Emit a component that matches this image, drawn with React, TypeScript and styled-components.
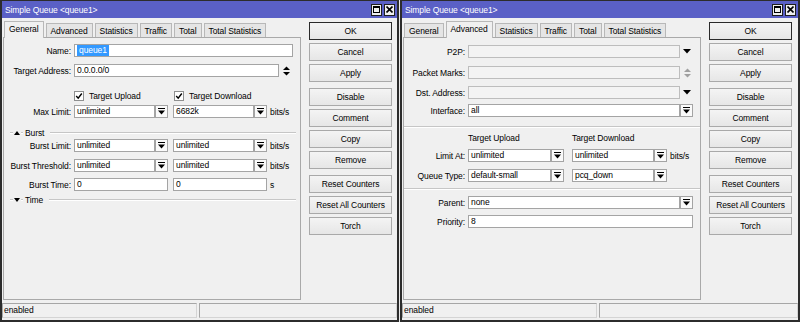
import React from "react";
import styled, { createGlobalStyle } from "styled-components";

const Global = createGlobalStyle`
  html, body { margin: 0; padding: 0; background: #e9e9e9; }
  body {
    font-family: "Liberation Sans", Arial, sans-serif;
    font-size: 8.5px;
    letter-spacing: -0.1px;
    color: #000;
  }
  * { box-sizing: border-box; }
`;

const Desktop = styled.div`
  display: flex;
  gap: 1px;
  width: 800px;
  height: 322px;
`;

const Win = styled.div<{ $w: number }>`
  width: ${(p) => p.$w}px;
  height: 322px;
  flex: none;
  border: 2px solid #2c2c2c;
  border-top-width: 1px;
  background: #f0f0f0;
  display: flex;
  flex-direction: column;
`;

const TitleBar = styled.div`
  height: 17px;
  flex: none;
  background: #5a60c6;
  color: #fff;
  display: flex;
  align-items: center;
  padding: 0 2px 0 3px;
`;

const TitleText = styled.span`
  flex: 1;
  white-space: nowrap;
`;

const TitleBtns = styled.div`
  display: flex;
  gap: 2px;
`;

const TitleBtn = styled.div`
  width: 11px;
  height: 12px;
  background: #efefef;
  border: 1px solid #1e1e1e;
  display: flex;
  align-items: center;
  justify-content: center;
`;

const Body = styled.div`
  flex: 1;
  display: flex;
  align-items: flex-start;
`;

const TabArea = styled.div`
  width: 298px;
  margin-left: 1px;
  padding-top: 3px;
  display: flex;
  flex-direction: column;
`;

const TabStrip = styled.div`
  display: flex;
  align-items: flex-end;
  gap: 2px;
  height: 16px;
  padding-left: 1px;
`;

const Tab = styled.div<{ $active?: boolean }>`
  height: ${(p) => (p.$active ? 17 : 14)}px;
  margin-bottom: ${(p) => (p.$active ? -1 : 0)}px;
  padding: 0 4px ${(p) => (p.$active ? 2 : 0)}px;
  border: 1px solid #b8b8b8;
  border-bottom: none;
  background: ${(p) => (p.$active ? "#f0f0f0" : "#e5e5e5")};
  display: flex;
  align-items: center;
  justify-content: center;
  white-space: nowrap;
  position: relative;
  z-index: ${(p) => (p.$active ? 1 : 0)};
`;

const Panel = styled.div`
  height: 263px;
  border: 1px solid #a9a9a9;
  background: #f0f0f0;
`;

const Form = styled.div<{ $labelW: number }>`
  --label-w: ${(p) => p.$labelW}px;
  display: flex;
  flex-direction: column;
`;

const Row = styled.div<{ $mt: number; $h?: number }>`
  display: flex;
  align-items: center;
  margin-top: ${(p) => p.$mt}px;
  height: ${(p) => p.$h ?? 13}px;
`;

const Label = styled.div`
  width: var(--label-w);
  margin-right: 3px;
  flex: none;
  text-align: right;
  white-space: nowrap;
`;

const TextBox = styled.div<{ $w: number; $disabled?: boolean }>`
  width: ${(p) => p.$w}px;
  height: 13px;
  flex: none;
  border: 1px solid ${(p) => (p.$disabled ? "#bdbdbd" : "#a4a4a4")};
  background: ${(p) => (p.$disabled ? "#f3f3f3" : "#ffffff")};
  padding-left: 2px;
  line-height: 11px;
  white-space: nowrap;
  overflow: hidden;
`;

const Sel = styled.span`
  display: inline-block;
  height: 11px;
  padding: 0 2px;
  background: #3399ff;
  color: #fff;
`;

const DropBtn = styled.div`
  width: 13px;
  height: 13px;
  flex: none;
  border: 1px solid #a4a4a4;
  background: #fafafa;
  display: flex;
  align-items: center;
  justify-content: center;
`;

const IconSlot = styled.div`
  width: 14px;
  height: 13px;
  flex: none;
  display: flex;
  align-items: center;
  justify-content: center;
`;

const Gap = styled.div<{ $w: number }>`
  width: ${(p) => p.$w}px;
  flex: none;
`;

const Unit = styled.span`
  margin-left: 3px;
  white-space: nowrap;
`;

const CheckItem = styled.div<{ $w: number }>`
  width: ${(p) => p.$w}px;
  flex: none;
  display: flex;
  align-items: center;
  gap: 5px;
  white-space: nowrap;
`;

const CheckBox = styled.div`
  width: 10px;
  height: 10px;
  flex: none;
  border: 1px solid #8e8f8f;
  background: #fff;
  display: flex;
  align-items: center;
  justify-content: center;
`;

const HeadText = styled.div<{ $w: number }>`
  width: ${(p) => p.$w}px;
  flex: none;
  white-space: nowrap;
`;

const GroupHead = styled.div<{ $mt: number }>`
  display: flex;
  align-items: center;
  height: 10px;
  margin-top: ${(p) => p.$mt}px;
  padding: 0 4px 0 6px;
  gap: 1px;
`;

const Etch = styled.div<{ $w?: number }>`
  height: 2px;
  border-top: 1px solid #c6c6c6;
  border-bottom: 1px solid #ffffff;
  ${(p) => (p.$w ? `width: ${p.$w}px; flex: none;` : "flex: 1;")}
`;

const GroupLabel = styled.span`
  margin: 0 5px 0 1px;
  white-space: nowrap;
`;

const Separator = styled.div<{ $mt: number }>`
  height: 2px;
  margin: ${(p) => p.$mt}px 0 0 0;
  border-top: 1px solid #c6c6c6;
  border-bottom: 1px solid #ffffff;
`;

const BtnCol = styled.div`
  width: 83px;
  margin-left: 8px;
  padding-top: 4px;
  display: flex;
  flex-direction: column;
  gap: 6px;
`;

const BtnGroup = styled.div`
  display: flex;
  flex-direction: column;
  gap: 3px;
`;

const Btn = styled.div<{ $default?: boolean }>`
  height: 18px;
  border: 1px solid ${(p) => (p.$default ? "#2a2a2a" : "#a9a9a9")};
  background: linear-gradient(#f4f4f4, #e6e6e6);
  display: flex;
  align-items: center;
  justify-content: center;
  white-space: nowrap;
`;

const StatusBar = styled.div`
  height: 19px;
  flex: none;
  display: flex;
  gap: 2px;
  padding-top: 2px;
`;

const StatusCell = styled.div<{ $w?: number }>`
  height: 15px;
  ${(p) => (p.$w ? `width: ${p.$w}px; flex: none;` : "flex: 1;")}
  border: 1px solid #a6a6a6;
  border-right-color: #d4d4d4;
  border-bottom-color: #d4d4d4;
  padding-left: 1px;
  line-height: 13px;
`;

/* ---------- icons ---------- */

const MaxIcon = () => (
  <svg width="7" height="7" viewBox="0 0 7 7">
    <rect x="0.5" y="0.5" width="6" height="6" fill="none" stroke="#000" />
    <rect x="0" y="0" width="7" height="2" fill="#000" />
  </svg>
);

const CloseIcon = () => (
  <svg width="7" height="7" viewBox="0 0 7 7">
    <path d="M0.5 0.5 L6.5 6.5 M6.5 0.5 L0.5 6.5" stroke="#000" strokeWidth="1.6" />
  </svg>
);

const BarDown = () => (
  <svg width="7" height="7" viewBox="0 0 7 7">
    <rect x="0" y="0" width="7" height="1" fill="#000" />
    <path d="M0 2.5 L7 2.5 L3.5 6.5 Z" fill="#000" />
  </svg>
);

const SpinIcon = ({ color = "#000" }: { color?: string }) => (
  <svg width="7" height="10" viewBox="0 0 7 10">
    <path d="M0 4 L7 4 L3.5 0.5 Z" fill={color} />
    <path d="M0 6 L7 6 L3.5 9.5 Z" fill={color} />
  </svg>
);

const DownIcon = () => (
  <svg width="8" height="5" viewBox="0 0 8 5">
    <path d="M0 0 L8 0 L4 4.5 Z" fill="#000" />
  </svg>
);

const Tri = ({ up }: { up?: boolean }) => (
  <svg width="6" height="4" viewBox="0 0 6 4">
    {up ? <path d="M0 4 L6 4 L3 0 Z" fill="#000" /> : <path d="M0 0 L6 0 L3 4 Z" fill="#000" />}
  </svg>
);

const CheckMark = () => (
  <svg width="8" height="8" viewBox="0 0 8 8">
    <path d="M1.2 4 L3.2 6.2 L6.8 1.5" fill="none" stroke="#000" strokeWidth="1.4" />
  </svg>
);

/* ---------- composites ---------- */

const TABS = ["General", "Advanced", "Statistics", "Traffic", "Total", "Total Statistics"];

const Combo = ({ w, value }: { w: number; value: string }) => (
  <>
    <TextBox $w={w}>{value}</TextBox>
    <DropBtn>
      <BarDown />
    </DropBtn>
  </>
);

const Buttons = () => (
  <BtnCol>
    <BtnGroup>
      <Btn $default>OK</Btn>
      <Btn>Cancel</Btn>
      <Btn>Apply</Btn>
    </BtnGroup>
    <BtnGroup>
      <Btn>Disable</Btn>
      <Btn>Comment</Btn>
      <Btn>Copy</Btn>
      <Btn>Remove</Btn>
    </BtnGroup>
    <BtnGroup>
      <Btn>Reset Counters</Btn>
      <Btn>Reset All Counters</Btn>
      <Btn>Torch</Btn>
    </BtnGroup>
  </BtnCol>
);

const Window = ({ w, active, children }: { w: number; active: string; children: React.ReactNode }) => (
  <Win $w={w}>
    <TitleBar>
      <TitleText>Simple Queue &lt;queue1&gt;</TitleText>
      <TitleBtns>
        <TitleBtn>
          <MaxIcon />
        </TitleBtn>
        <TitleBtn>
          <CloseIcon />
        </TitleBtn>
      </TitleBtns>
    </TitleBar>
    <Body>
      <TabArea>
        <TabStrip>
          {TABS.map((t) => (
            <Tab key={t} $active={t === active}>
              {t}
            </Tab>
          ))}
        </TabStrip>
        <Panel>{children}</Panel>
      </TabArea>
      <Buttons />
    </Body>
    <StatusBar>
      <StatusCell $w={195}>enabled</StatusCell>
      <StatusCell />
    </StatusBar>
  </Win>
);

const GeneralForm = () => (
  <Form $labelW={67}>
    <Row $mt={6}>
      <Label>Name:</Label>
      <TextBox $w={219}>
        <Sel>queue1</Sel>
      </TextBox>
    </Row>
    <Row $mt={7}>
      <Label>Target Address:</Label>
      <TextBox $w={205}>0.0.0.0/0</TextBox>
      <IconSlot>
        <SpinIcon />
      </IconSlot>
    </Row>
    <Row $mt={13} $h={12}>
      <Label />
      <CheckItem $w={100}>
        <CheckBox>
          <CheckMark />
        </CheckBox>
        Target Upload
      </CheckItem>
      <CheckItem $w={110}>
        <CheckBox>
          <CheckMark />
        </CheckBox>
        Target Download
      </CheckItem>
    </Row>
    <Row $mt={3}>
      <Label>Max Limit:</Label>
      <Combo w={81} value="unlimited" />
      <Gap $w={5} />
      <Combo w={81} value="6682k" />
      <Unit>bits/s</Unit>
    </Row>
    <GroupHead $mt={10}>
      <Etch $w={3} />
      <Tri up />
      <Etch $w={2} />
      <GroupLabel>Burst</GroupLabel>
      <Etch />
    </GroupHead>
    <Row $mt={1}>
      <Label>Burst Limit:</Label>
      <Combo w={81} value="unlimited" />
      <Gap $w={5} />
      <Combo w={81} value="unlimited" />
      <Unit>bits/s</Unit>
    </Row>
    <Row $mt={7}>
      <Label>Burst Threshold:</Label>
      <Combo w={81} value="unlimited" />
      <Gap $w={5} />
      <Combo w={81} value="unlimited" />
      <Unit>bits/s</Unit>
    </Row>
    <Row $mt={6}>
      <Label>Burst Time:</Label>
      <TextBox $w={94}>0</TextBox>
      <Gap $w={5} />
      <TextBox $w={94}>0</TextBox>
      <Unit>s</Unit>
    </Row>
    <GroupHead $mt={4}>
      <Etch $w={3} />
      <Tri />
      <Etch $w={2} />
      <GroupLabel>Time</GroupLabel>
      <Etch />
    </GroupHead>
  </Form>
);

const AdvancedForm = () => (
  <Form $labelW={61}>
    <Row $mt={7}>
      <Label>P2P:</Label>
      <TextBox $w={212} $disabled />
      <IconSlot>
        <DownIcon />
      </IconSlot>
    </Row>
    <Row $mt={8}>
      <Label>Packet Marks:</Label>
      <TextBox $w={212} $disabled />
      <IconSlot>
        <SpinIcon color="#a0a0a0" />
      </IconSlot>
    </Row>
    <Row $mt={7}>
      <Label>Dst. Address:</Label>
      <TextBox $w={212} $disabled />
      <IconSlot>
        <DownIcon />
      </IconSlot>
    </Row>
    <Row $mt={5}>
      <Label>Interface:</Label>
      <Combo w={212} value="all" />
    </Row>
    <Separator $mt={9} />
    <Row $mt={5} $h={10}>
      <Label />
      <HeadText $w={104}>Target Upload</HeadText>
      <HeadText $w={100}>Target Download</HeadText>
    </Row>
    <Row $mt={6}>
      <Label>Limit At:</Label>
      <Combo w={83} value="unlimited" />
      <Gap $w={8} />
      <Combo w={82} value="unlimited" />
      <Unit>bits/s</Unit>
    </Row>
    <Row $mt={7}>
      <Label>Queue Type:</Label>
      <Combo w={83} value="default-small" />
      <Gap $w={8} />
      <Combo w={82} value="pcq_down" />
    </Row>
    <Separator $mt={6} />
    <Row $mt={6}>
      <Label>Parent:</Label>
      <Combo w={212} value="none" />
    </Row>
    <Row $mt={6}>
      <Label>Priority:</Label>
      <TextBox $w={225}>8</TextBox>
    </Row>
  </Form>
);

export default function App() {
  return (
    <>
      <Global />
      <Desktop>
        <Window w={399} active="General">
          <GeneralForm />
        </Window>
        <Window w={400} active="Advanced">
          <AdvancedForm />
        </Window>
      </Desktop>
    </>
  );
}
